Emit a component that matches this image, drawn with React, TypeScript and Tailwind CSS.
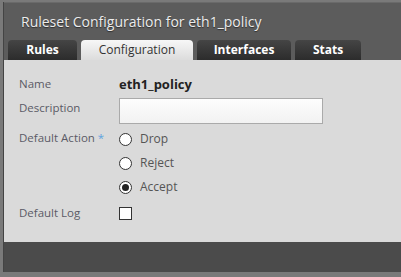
import React from "react";

const tabs = ["Rules", "Configuration", "Interfaces", "Stats"];

function Radio({ label, checked }: { label: string; checked?: boolean }) {
  return (
    <div className="flex h-[24px] items-center gap-[8px]">
      <span className="flex h-[13px] w-[13px] items-center justify-center rounded-full border border-[#333] bg-white">
        {checked && <span className="h-[7px] w-[7px] rounded-full bg-[#222]" />}
      </span>
      <span className="text-[12px] text-[#555]">{label}</span>
    </div>
  );
}

export default function App() {
  return (
    <div className="h-[277px] w-[401px] overflow-hidden bg-[#7a7a7a] pl-[3px] pt-[2px] font-['Open_Sans',sans-serif]">
      <div className="flex h-[270px] flex-col border-l border-[#444] bg-[#5c5c5c]">
        <div className="flex h-[38px] items-center border-t border-[#6a6a6a] pl-[17px] text-[14px] text-[#ececec] [text-shadow:0_1px_1px_rgba(0,0,0,0.5)]">
          Ruleset Configuration for eth1_policy
        </div>
        <div className="flex h-[20px] items-end gap-[4px] pl-[4px]">
          {tabs.map((t) => {
            const active = t === "Configuration";
            const w = { Rules: "w-[69px]", Configuration: "w-[112px]", Interfaces: "w-[94px]", Stats: "w-[66px]" }[t];
            return (
              <div
                key={t}
                className={`flex h-[20px] ${w} items-center justify-center rounded-t-[4px] text-[12px] ${
                  active
                    ? "bg-gradient-to-b from-[#f7f7f7] to-[#dcdcdc] text-[#333]"
                    : "bg-gradient-to-b from-[#454545] to-[#2c2c2c] font-bold text-white"
                }`}
              >
                {t}
              </div>
            );
          })}
        </div>
        <div className="flex-1 bg-[#dadada] pl-[15px] pt-[14px] text-[11.5px]">
          <div className="grid grid-cols-[100px_1fr] items-center">
            <div className="h-[20px] leading-[20px] text-[#5a5a66]">Name</div>
            <div className="h-[20px] text-[13px] font-bold leading-[20px] text-[#222]">eth1_policy</div>
            <div className="self-start pt-[5px] text-[#5a5a66]">Description</div>
            <div className="h-[30px] pt-[4px]">
              <div className="h-[26px] w-[204px] border border-[#aaa] bg-gradient-to-b from-[#fdfdfd] to-[#f2f2f2]" />
            </div>
            <div className="self-start pt-[5px] text-[#5a5a66]">
              Default Action <span className="text-[#5ea3e0]">*</span>
            </div>
            <div className="flex flex-col pt-[3px]">
              <Radio label="Drop" />
              <Radio label="Reject" />
              <Radio label="Accept" checked />
            </div>
            <div className="pt-[5px] text-[#5a5a66]">Default Log</div>
            <div className="pt-[7px]">
              <span className="block h-[13px] w-[13px] border border-[#333] bg-white" />
            </div>
          </div>
        </div>
        <div className="h-[30px] bg-[#4b4b4b]" />
      </div>
    </div>
  );
}
